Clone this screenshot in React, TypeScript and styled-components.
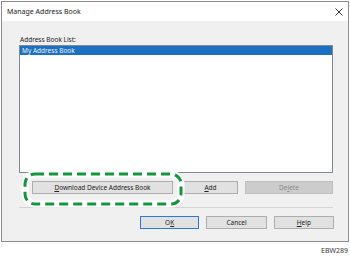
import * as React from "react"
import styled, { createGlobalStyle } from "styled-components"

const GlobalStyle = createGlobalStyle`
  html, body {
    margin: 0;
    padding: 0;
    background: #ffffff;
  }
  body {
    font-family: "Noto Sans", "Open Sans", sans-serif;
    width: 350px;
    height: 256px;
    overflow: hidden;
  }
`

const Key = styled.span`
  text-decoration: underline;
  text-underline-offset: 1px;
`

const App = () => {
  return (
    <>
      <GlobalStyle />
      <Page>
        <Dialog>
          <TitleBar>
            <Title>Manage Address Book</Title>
            <CloseIcon width="8" height="8" viewBox="0 0 8 8">
              <path d="M0.5 0.5 L7.5 7.5 M7.5 0.5 L0.5 7.5" stroke="#222" strokeWidth="0.9" />
            </CloseIcon>
          </TitleBar>
          <Body>
            <Label>Address Book List:</Label>
            <ListBox>
              <ListRow $selected>My Address Book</ListRow>
            </ListBox>
            <ActionRow>
              <Button $width={141}>
                <Key>D</Key>ownload Device Address Book
              </Button>
              <Button $width={55} $gap={10}>
                <Key>A</Key>dd
              </Button>
              <Button $width={88} $gap={7} disabled>
                De<Key>l</Key>ete
              </Button>
            </ActionRow>
            <Separator />
            <FooterRow>
              <Button $width={60} $default>
                O<Key>K</Key>
              </Button>
              <Button $width={61} $gap={7}>
                Cancel
              </Button>
              <Button $width={61} $gap={7}>
                <Key>H</Key>elp
              </Button>
            </FooterRow>
          </Body>
          <Callout width="164" height="38" viewBox="0 0 164 38">
            <rect x="4" y="4" width="156" height="30" rx="10" fill="none" stroke="#ffffff" strokeWidth="7" />
            <rect x="4" y="4" width="156" height="30" rx="10" fill="none" stroke="#14963c" strokeWidth="3" strokeDasharray="9 5" />
          </Callout>
        </Dialog>
        <FigureId>EBW289</FigureId>
      </Page>
    </>
  )
}

export default App

// Styles
const Page = styled.div`
  width: 350px;
  height: 256px;
  padding: 1px 0 0 1px;
  box-sizing: border-box;
`

const Dialog = styled.div`
  position: relative;
  width: 348px;
  height: 241px;
  border: 1px solid #8c8c8c;
  box-sizing: border-box;
  display: flex;
  flex-direction: column;
`

const TitleBar = styled.div`
  height: 19px;
  background: #ffffff;
  display: flex;
  align-items: center;
  justify-content: space-between;
  padding: 0 5px 0 5px;
`

const Title = styled.span`
  font-size: 7px;
  color: #222;
`

const CloseIcon = styled.svg`
  display: block;
  margin-right: 0;
`

const Body = styled.div`
  flex: 1;
  background: #f0f0f0;
  padding: 14px 14px 0 17px;
  display: flex;
  flex-direction: column;
`

const Label = styled.div`
  font-size: 6.5px;
  line-height: 10px;
  height: 10px;
  color: #222;
  padding-left: 1px;
`

const ListBox = styled.div`
  width: 314px;
  height: 128px;
  box-sizing: border-box;
  border: 1px solid #828790;
  background: #ffffff;
`

const ListRow = styled.div<{ $selected?: boolean }>`
  height: 9px;
  line-height: 9px;
  font-size: 6.5px;
  padding-left: 2px;
  color: ${(p) => (p.$selected ? "#e8f0fa" : "#222")};
  background: ${(p) => (p.$selected ? "#1c6fc1" : "transparent")};
`

const ActionRow = styled.div`
  display: flex;
  margin-top: 8px;
  padding-left: 13px;
`

const Button = styled.button<{ $width: number; $gap?: number; $default?: boolean }>`
  width: ${(p) => p.$width}px;
  height: 13px;
  margin: 0 0 0 ${(p) => p.$gap ?? 0}px;
  padding: 0;
  box-sizing: border-box;
  font-family: "Noto Sans", "Open Sans", sans-serif;
  font-size: 6.5px;
  line-height: 11px;
  color: #222;
  background: #e1e1e1;
  border: 1px solid ${(p) => (p.$default ? "#2a7bd3" : "#adadad")};
  outline: none;

  &:disabled {
    background: #cccccc;
    border-color: #bfbfbf;
    color: #8a8a8a;
  }
`

const Separator = styled.div`
  width: 314px;
  height: 1px;
  margin-top: 13px;
  background: #d6d6d6;
`

const FooterRow = styled.div`
  display: flex;
  margin-top: 8px;
  padding-left: 121px;
`

const Callout = styled.svg`
  position: absolute;
  left: 19px;
  top: 168px;
  display: block;
`

const FigureId = styled.div`
  font-size: 7px;
  color: #333;
  text-align: right;
  padding-right: 2px;
  margin-top: 4px;
  line-height: 10px;
`
